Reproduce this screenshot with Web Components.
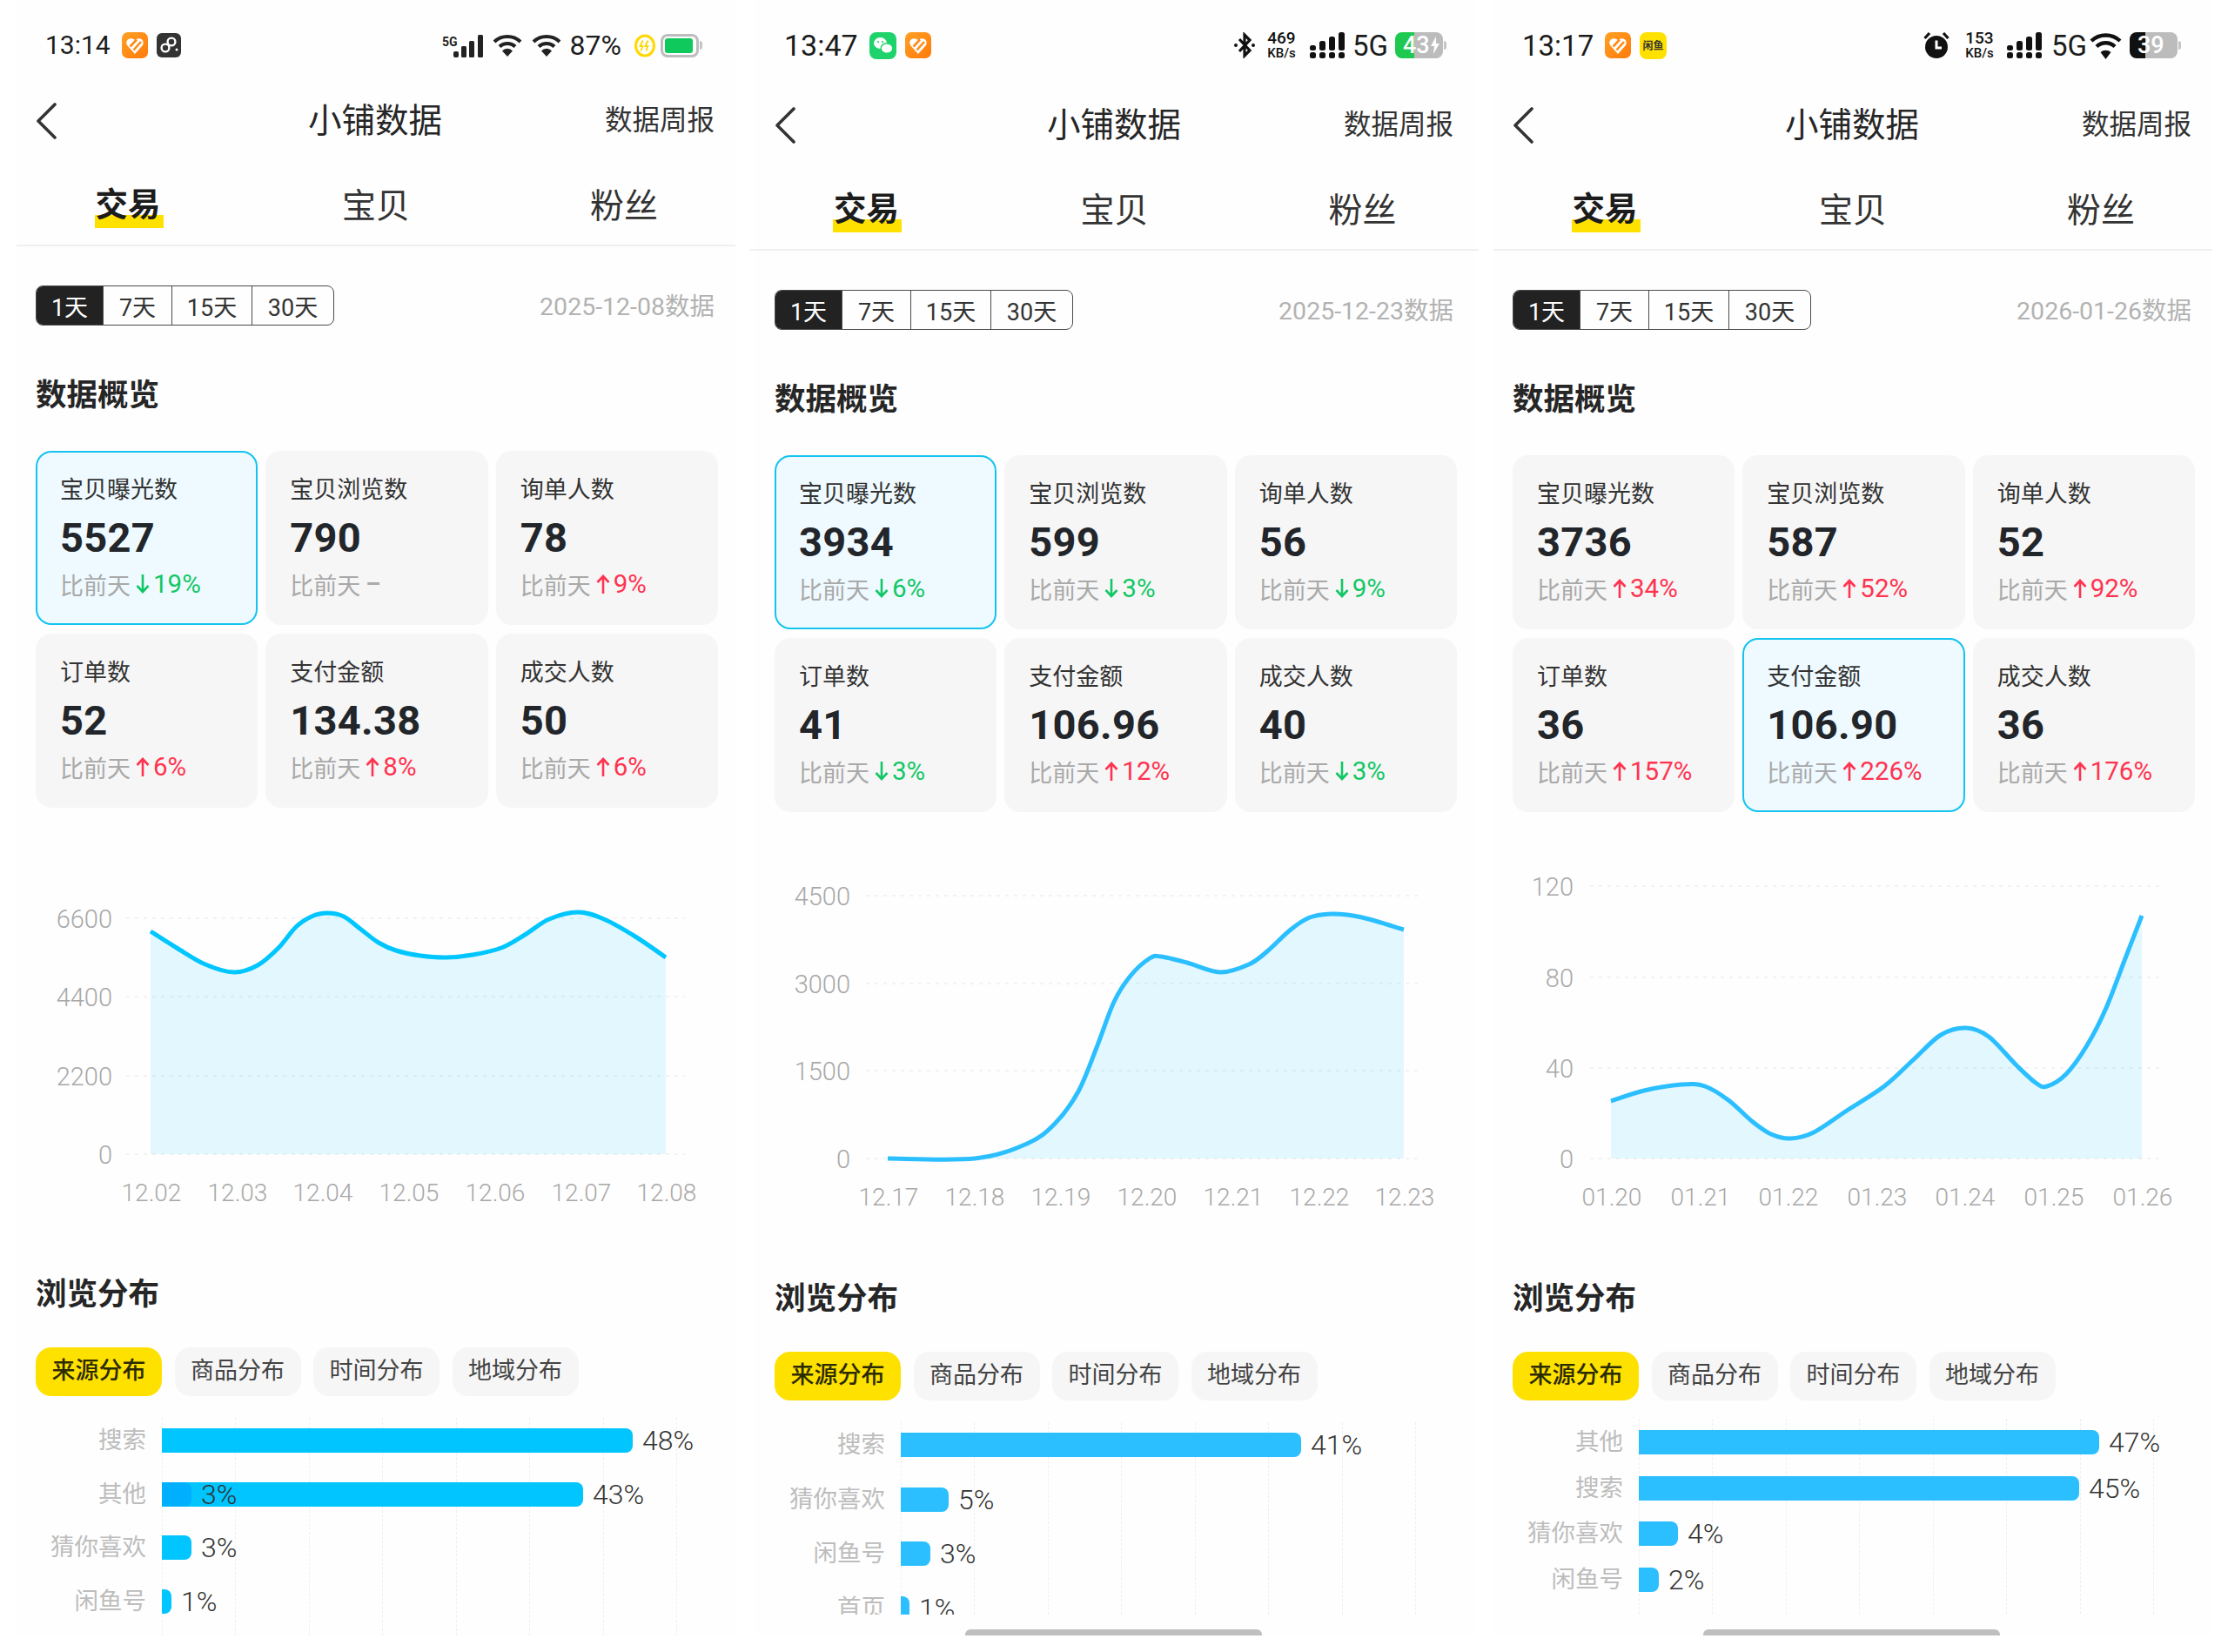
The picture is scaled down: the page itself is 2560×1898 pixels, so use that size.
<!DOCTYPE html>
<html lang="zh">
<head>
<meta charset="utf-8">
<title>小铺数据</title>
<style>
  html, body { margin: 0; padding: 0; background: #fff; }
  body {
    width: 2560px; height: 1898px; overflow: hidden;
    font-family: Roboto, "Noto Sans CJK SC", sans-serif; color: #222;
  }
  #page { display: flex; padding-left: 19px; }
  #page > phone-panel + phone-panel { margin-left: 23px; }
  #page > phone-panel:last-child { margin-left: 22px; }
</style>
</head>
<body>
<div id="page">

  <!-- first screenshot -->
  <phone-panel>
    <status-bar time="13:14" size="30" end="14">
      <status-icon slot="apps" name="orange"></status-icon>
      <status-icon slot="apps" name="dark"></status-icon>
      <status-icon name="signal5g"></status-icon>
      <status-icon name="wifi" style="margin-left:10px"></status-icon>
      <status-icon name="wifi" style="margin-left:11px"></status-icon>
      <status-text size="32" style="margin-left:10px">87%</status-text>
      <status-icon name="charge" style="margin-left:15px"></status-icon>
      <status-battery kind="outline" style="margin-left:6px"></status-battery>
    </status-bar>
    <nav-header></nav-header>
    <top-tabs></top-tabs>
    <range-row date="2025-12-08数据"></range-row>
    <section-title>数据概览</section-title>
    <metric-grid>
      <metric-card active label="宝贝曝光数" value="5527" trend="19%" dir="down"></metric-card>
      <metric-card label="宝贝浏览数" value="790" trend="" dir="flat"></metric-card>
      <metric-card label="询单人数" value="78" trend="9%" dir="up"></metric-card>
      <metric-card label="订单数" value="52" trend="6%" dir="up"></metric-card>
      <metric-card label="支付金额" value="134.38" trend="8%" dir="up"></metric-card>
      <metric-card label="成交人数" value="50" trend="6%" dir="up"></metric-card>
    </metric-grid>
    <trend-chart left="19" top="927" color="#00c6ff" gx1="145" gx2="787" lx="129" xy="1379"
      ylabels="6600:1054,4400:1144,2200:1235,0:1325"
      xlabels="12.02:174,12.03:273,12.04:371,12.05:470,12.06:569,12.07:668,12.08:766"
      points="173,1069 203,1088 236,1107 269,1116 296,1108 320,1088 340,1064 358,1052 376,1048 395,1052 415,1067 435,1082 455,1091 483,1097 513,1099 543,1096 576,1088 603,1073 631,1055 664,1047 694,1055 730,1075 765,1099"></trend-chart>
    <section-title gap="0">浏览分布</section-title>
    <pill-tabs></pill-tabs>
    <dist-bars style="--dist-h:250px;--dist-pad:12px;--dist-gap:33.5px;--dist-top:25px">
      <dist-row label="搜索" value="48%" width="541"></dist-row>
      <dist-row label="其他" value="43%" width="484" overlay="3%" overlay-width="34"></dist-row>
      <dist-row label="猜你喜欢" value="3%" width="34"></dist-row>
      <dist-row label="闲鱼号" value="1%" width="11"></dist-row>
    </dist-bars>
  </phone-panel>

  <!-- second screenshot -->
  <phone-panel style="--shift:5px;--rule-l:-28px;--rule-r:-29px;--bar:#2bbfff">
    <status-bar time="13:47" size="34" end="8">
      <status-icon slot="apps" name="wechat"></status-icon>
      <status-icon slot="apps" name="orange"></status-icon>
      <status-icon name="bluetooth"></status-icon>
      <status-speed style="margin-left:12px">469</status-speed>
      <status-icon name="signal" style="margin-left:15px"></status-icon>
      <status-text size="33" style="margin-left:8px">5G</status-text>
      <status-battery kind="solid" level="40" tone="#1fc94f" text="43" bolt style="margin-left:8px"></status-battery>
    </status-bar>
    <nav-header></nav-header>
    <top-tabs></top-tabs>
    <range-row date="2025-12-23数据"></range-row>
    <section-title>数据概览</section-title>
    <metric-grid>
      <metric-card active label="宝贝曝光数" value="3934" trend="6%" dir="down"></metric-card>
      <metric-card label="宝贝浏览数" value="599" trend="3%" dir="down"></metric-card>
      <metric-card label="询单人数" value="56" trend="9%" dir="down"></metric-card>
      <metric-card label="订单数" value="41" trend="3%" dir="down"></metric-card>
      <metric-card label="支付金额" value="106.96" trend="12%" dir="up"></metric-card>
      <metric-card label="成交人数" value="40" trend="3%" dir="down"></metric-card>
    </metric-grid>
    <trend-chart left="868" top="932" color="#2bbfff" gx1="995" gx2="1635" lx="977" xy="1384"
      ylabels="4500:1028,3000:1129,1500:1229,0:1330"
      xlabels="12.17:1021,12.18:1120,12.19:1219,12.20:1318,12.21:1417,12.22:1516,12.23:1614"
      points="1020,1330 1120,1330 1180,1313 1212,1290 1239,1253 1261,1200 1280,1150 1299,1120 1321,1100 1334,1098 1364,1105 1402,1116 1435,1107 1456,1092 1483,1067 1505,1053 1532,1049 1565,1053 1613,1067"></trend-chart>
    <section-title gap="0">浏览分布</section-title>
    <pill-tabs></pill-tabs>
    <dist-bars style="--dist-h:221px;--dist-pad:12px;--dist-gap:34.5px;--dist-top:25px">
      <dist-row label="搜索" value="41%" width="460"></dist-row>
      <dist-row label="猜你喜欢" value="5%" width="55"></dist-row>
      <dist-row label="闲鱼号" value="3%" width="34"></dist-row>
      <dist-row label="首页" value="1%" width="10"></dist-row>
    </dist-bars>
    <scroll-thumb></scroll-thumb>
  </phone-panel>

  <!-- third screenshot -->
  <phone-panel style="--shift:5px;--bar:#2bbfff">
    <status-bar time="13:17" size="33" end="12">
      <status-icon slot="apps" name="orange"></status-icon>
      <status-icon slot="apps" name="yellow"></status-icon>
      <status-icon name="alarm"></status-icon>
      <status-speed style="margin-left:16px">153</status-speed>
      <status-icon name="signal" style="margin-left:14px"></status-icon>
      <status-text size="33" style="margin-left:10px">5G</status-text>
      <status-icon name="wifi-big" style="margin-left:3px"></status-icon>
      <status-battery kind="solid" level="32" tone="#111" text="39" style="margin-left:9px"></status-battery>
    </status-bar>
    <nav-header></nav-header>
    <top-tabs></top-tabs>
    <range-row date="2026-01-26数据"></range-row>
    <section-title>数据概览</section-title>
    <metric-grid>
      <metric-card label="宝贝曝光数" value="3736" trend="34%" dir="up"></metric-card>
      <metric-card label="宝贝浏览数" value="587" trend="52%" dir="up"></metric-card>
      <metric-card label="询单人数" value="52" trend="92%" dir="up"></metric-card>
      <metric-card label="订单数" value="36" trend="157%" dir="up"></metric-card>
      <metric-card active label="支付金额" value="106.90" trend="226%" dir="up"></metric-card>
      <metric-card label="成交人数" value="36" trend="176%" dir="up"></metric-card>
    </metric-grid>
    <trend-chart left="1716" top="932" color="#2bbfff" gx1="1827" gx2="2482" lx="1808" xy="1384"
      ylabels="120:1017,80:1122,40:1226,0:1330"
      xlabels="01.20:1852,01.21:1954,01.22:2055,01.23:2157,01.24:2258,01.25:2360,01.26:2462"
      points="1851,1264 1889,1252 1932,1245 1959,1247 1986,1263 2014,1288 2035,1302 2057,1307 2084,1300 2122,1275 2165,1247 2198,1217 2230,1188 2259,1180 2285,1190 2317,1223 2339,1243 2352,1247 2374,1233 2398,1200 2420,1157 2442,1100 2461,1051"></trend-chart>
    <section-title gap="0">浏览分布</section-title>
    <pill-tabs></pill-tabs>
    <dist-bars style="--dist-h:224px;--dist-pad:13px;--dist-gap:24.6px;--dist-top:21px">
      <dist-row label="其他" value="47%" width="529"></dist-row>
      <dist-row label="搜索" value="45%" width="506"></dist-row>
      <dist-row label="猜你喜欢" value="4%" width="45"></dist-row>
      <dist-row label="闲鱼号" value="2%" width="23"></dist-row>
    </dist-bars>
    <scroll-thumb></scroll-thumb>
  </phone-panel>

</div>

<script>
// each screenshot of the app
class PhonePanel extends HTMLElement {
    constructor() {
        super();
        this.attachShadow({ mode: 'open' }).innerHTML = `
          <style>
            :host {
              display: block; position: relative; box-sizing: border-box;
              width: 826px; height: 1880px; padding: 0 24px 0 22px;
              background: #fefefe; flex: none;
            }
          </style>
          <slot></slot>`;
    }
}

class StatusBar extends HTMLElement {
    connectedCallback() {
        const size = this.getAttribute('size');
        const end = this.getAttribute('end');
        this.attachShadow({ mode: 'open' }).innerHTML = `
          <style>
            :host { display: flex; align-items: center; height: 104px; margin-left: 11px; padding-right: ${end}px; }
            .time { font-size: ${size}px; color: #1c1c1c; margin-right: 13px; line-height: 1; }
            .apps { display: flex; gap: 10px; align-items: center; }
            .right { margin-left: auto; display: flex; align-items: center; }
          </style>
          <span class="time">${this.getAttribute('time')}</span>
          <div class="apps"><slot name="apps"></slot></div>
          <div class="right"><slot></slot></div>`;
    }
}

const ICONS = {
    orange: [30, 30, `<defs><linearGradient id="o" x1="0" y1="0" x2="1" y2="1"><stop offset="0" stop-color="#ffa126"/><stop offset="1" stop-color="#ff7a0a"/></linearGradient></defs>
        <rect width="30" height="30" rx="7" fill="url(#o)"/>
        <path d="M15 25 L6.5 15.5 C2.5 10 9 4 15 9 C21 4 27.5 10 23.5 15.5 Z" fill="#fff"/>
        <path d="M9.5 16.5 L17 8.5 M13.5 20.5 L22 11" stroke="#ff8a14" stroke-width="2.6" fill="none"/>`],
    dark: [28, 28, `<rect width="28" height="28" rx="6" fill="#333"/>
        <circle cx="10" cy="17" r="4.4" fill="none" stroke="#fff" stroke-width="2.4"/>
        <circle cx="17" cy="10" r="4.4" fill="none" stroke="#fff" stroke-width="2.4"/>
        <circle cx="23" cy="19" r="1.5" fill="#fff"/>`],
    wechat: [31, 31, `<rect width="31" height="31" rx="8" fill="#1ed36b"/>
        <ellipse cx="12.5" cy="12.5" rx="7.5" ry="6.5" fill="#fff"/>
        <ellipse cx="20" cy="18.5" rx="6.8" ry="5.8" fill="#fff" stroke="#1ed36b" stroke-width="1.4"/>
        <circle cx="10" cy="11" r="1.1" fill="#1ed36b"/><circle cx="15" cy="11" r="1.1" fill="#1ed36b"/>`],
    yellow: [31, 31, `<rect width="31" height="31" rx="8" fill="#ffe100"/>
        <text x="15.5" y="20" font-size="12" font-weight="700" fill="#333" text-anchor="middle" font-family="Noto Sans CJK SC">闲鱼</text>`],
    signal5g: [48, 27, `<text x="0" y="13.5" font-size="14" font-weight="700" fill="#222" font-family="Roboto">5G</text>
        <rect x="13" y="20" width="6" height="7" rx="2" fill="#222"/>
        <rect x="22" y="14" width="6" height="13" rx="1.5" fill="#222"/>
        <rect x="31" y="8" width="6" height="19" rx="1.5" fill="#222"/>
        <rect x="41" y="1" width="6" height="26" rx="1.5" fill="#222"/>`],
    signal: [41, 30, `<g fill="#111">
        <rect x="0" y="23" width="7" height="7" rx="2.5"/><rect x="11" y="23" width="7" height="7" rx="2.5"/><rect x="22" y="23" width="7" height="7" rx="2.5"/><rect x="33" y="23" width="7" height="7" rx="2.5"/>
        <rect x="0" y="15" width="7" height="6" rx="2.5"/><rect x="11" y="10" width="7" height="11" rx="2.5"/><rect x="22" y="5" width="7" height="16" rx="2.5"/><rect x="33" y="0" width="7" height="21" rx="2.5"/></g>`],
    wifi: [34, 26, `<g fill="none" stroke="#222" stroke-width="4">
        <path d="M2 9 A22 22 0 0 1 32 9"/><path d="M8 14.5 A13 13 0 0 1 26 14.5"/></g>
        <path d="M17 26 L11 19.5 A8 8 0 0 1 23 19.5 Z" fill="#222"/>`],
    'wifi-big': [37, 31, `<g fill="none" stroke="#111" stroke-width="4.4">
        <path d="M2 10 A24 24 0 0 1 35 10"/><path d="M8 16.5 A15 15 0 0 1 29 16.5"/></g>
        <path d="M18.5 31 L12.5 23 A9 9 0 0 1 24.5 23 Z" fill="#111"/>`],
    charge: [24, 27, `<ellipse cx="12" cy="13.5" rx="10.5" ry="11.5" fill="none" stroke="#ffd800" stroke-width="3"/>
        <path d="M9.5 7.5 L6.5 14 H9.5 L7.5 19.5 M15.5 7.5 L12.5 14 H15.5 L13.5 19.5" fill="none" stroke="#ffd800" stroke-width="1.8"/>`],
    bluetooth: [26, 30, `<path d="M7 8 L19 21 L13 27 V3 L19 9 L7 22" fill="none" stroke="#111" stroke-width="3.2"/>
        <circle cx="3" cy="15" r="2" fill="#111"/><circle cx="23" cy="15" r="2" fill="#111"/>`],
    alarm: [32, 32, `<circle cx="16" cy="18" r="13" fill="#111"/>
        <path d="M16 10.5 V19 H22" fill="none" stroke="#fff" stroke-width="3"/>
        <path d="M2.5 8 L8 2 M29.5 8 L24 2" stroke="#111" stroke-width="3.2" fill="none"/>`],
};

class StatusIcon extends HTMLElement {
    connectedCallback() {
        const [w, h, body] = ICONS[this.getAttribute('name')];
        this.attachShadow({ mode: 'open' }).innerHTML = `
          <style>:host { display: block; line-height: 0; width: ${w}px; height: ${h}px; } svg { display: block; }</style>
          <svg width="${w}" height="${h}" viewBox="0 0 ${w} ${h}">${body}</svg>`;
    }
}

class StatusText extends HTMLElement {
    connectedCallback() {
        this.attachShadow({ mode: 'open' }).innerHTML = `
          <style>:host { display: block; font-size: ${this.getAttribute('size')}px; line-height: 1; color: #1c1c1c; }</style><slot></slot>`;
    }
}

class StatusSpeed extends HTMLElement {
    connectedCallback() {
        this.attachShadow({ mode: 'open' }).innerHTML = `
          <style>
            :host { display: flex; flex-direction: column; align-items: center; color: #111; width: 35px; }
            b { font-size: 19px; font-weight: 500; line-height: 18px; }
            span { font-size: 15px; font-weight: 500; line-height: 16px; white-space: nowrap; }
          </style>
          <b><slot></slot></b><span>KB/s</span>`;
    }
}

class StatusBattery extends HTMLElement {
    connectedCallback() {
        const kind = this.getAttribute('kind');
        let inner;
        if (kind === 'outline') {
            inner = `<div class="outline"><i></i></div><u class="nub"></u>`;
        } else {
            const lvl = this.getAttribute('level');
            const tone = this.getAttribute('tone');
            const bolt = this.hasAttribute('bolt')
                ? `<svg width="10" height="20" viewBox="0 0 10 20"><path d="M6 0 L0 11 H4 L3 20 L10 8 H6 Z" fill="#fff"/></svg>` : '';
            inner = `<div class="solid" style="background:linear-gradient(90deg,${tone} ${lvl}%,#bcbcbc ${lvl}%)"><span>${this.getAttribute('text')}</span>${bolt}</div><u class="nub"></u>`;
        }
        this.attachShadow({ mode: 'open' }).innerHTML = `
          <style>
            :host { display: flex; align-items: center; }
            .outline { box-sizing: border-box; width: 44px; height: 27px; border: 3px solid #bdbdbd; border-radius: 8px; padding: 2px; }
            .outline i { display: block; width: 32px; height: 100%; background: #10c95c; border-radius: 3px; }
            .solid { box-sizing: border-box; width: 55px; height: 30px; border-radius: 8px; display: flex; align-items: center; padding-left: 9px; gap: 1px;
                     color: #fff; font-size: 27px; font-weight: 500; line-height: 1; }
            .nub { width: 3px; height: 10px; background: #c4c4c4; border-radius: 0 3px 3px 0; margin-left: 1px; }
          </style>${inner}`;
    }
}

class NavHeader extends HTMLElement {
    constructor() {
        super();
        this.attachShadow({ mode: 'open' }).innerHTML = `
          <style>
            :host { display: grid; grid-template-columns: 1fr auto 1fr; align-items: center; height: 70px; margin-top: var(--shift, 0px); }
            svg { display: block; }
            .title { font-size: 38.5px; color: #262626; line-height: 1; }
            .more { justify-self: end; font-size: 31.5px; color: #333; line-height: 1; }
          </style>
          <svg width="24" height="42" viewBox="0 0 24 42"><path d="M22 2 L3 21 L22 40" fill="none" stroke="#333" stroke-width="3.6" stroke-linecap="round" stroke-linejoin="round"/></svg>
          <span class="title">小铺数据</span>
          <span class="more">数据周报</span>`;
    }
}

class TopTabs extends HTMLElement {
    constructor() {
        super();
        this.attachShadow({ mode: 'open' }).innerHTML = `
          <style>
            :host {
              display: flex; justify-content: center; align-items: center; height: 91px; margin: 16px var(--rule-r, -24px) 0 var(--rule-l, -22px);
              border-bottom: 2px solid #efefef; box-sizing: content-box;
            }
            div { width: 285px; flex: none; text-align: center; font-size: 39px; line-height: 1; color: #333; position: relative; top: 2px; }
            b { position: relative; display: inline-block; font-size: 37.5px; font-weight: 700; color: #1c1c1c; }
            b::before { content: ""; position: absolute; left: -1px; right: -3px; bottom: -7px; height: 15px; background: #ffe100; z-index: -1; }
            .on { z-index: 0; top: 0; }
          </style>
          <div class="on"><b>交易</b></div><div>宝贝</div><div>粉丝</div>`;
    }
}

class RangeRow extends HTMLElement {
    connectedCallback() {
        this.attachShadow({ mode: 'open' }).innerHTML = `
          <style>
            :host { display: flex; justify-content: space-between; align-items: center; height: 46px; margin-top: 45px; }
            .seg { display: flex; height: 46px; box-sizing: border-box; border: 1.5px solid #4a4a4a; border-radius: 8px; overflow: hidden; }
            .seg span { display: flex; align-items: center; justify-content: center; font-size: 27px; color: #333; border-left: 1.5px solid #4a4a4a; box-sizing: border-box; }
            .seg span:first-child { background: #222; color: #fff; border-left: 0; }
            .date { font-size: 28.5px; color: #b2b2b2; position: relative; top: -2px; }
          </style>
          <div class="seg">
            <span style="width:76px">1天</span><span style="width:79px">7天</span><span style="width:92px">15天</span><span style="width:94px">30天</span>
          </div>
          <span class="date">${this.getAttribute('date')}</span>`;
    }
}

class SectionTitle extends HTMLElement {
    connectedCallback() {
        const gap = this.getAttribute('gap') ?? '55';
        this.attachShadow({ mode: 'open' }).innerHTML = `
          <style>:host { display: block; height: 50px; line-height: 50px; font-size: 35.5px; font-weight: 700; color: #262626; margin-top: ${gap}px; }</style>
          <slot></slot>`;
    }
}

class MetricGrid extends HTMLElement {
    constructor() {
        super();
        this.attachShadow({ mode: 'open' }).innerHTML = `
          <style>:host { display: grid; grid-template-columns: repeat(3, 1fr); gap: 10px 9px; width: 784px; margin-top: 39px; }</style>
          <slot></slot>`;
    }
}

class MetricCard extends HTMLElement {
    connectedCallback() {
        const dir = this.getAttribute('dir');
        const colour = dir === 'up' ? '#ff3350' : '#12c765';
        let mark = '<span class="flat">–</span>';
        if (dir === 'up') {
            mark = `<svg width="18" height="24" viewBox="0 0 18 24"><path d="M9 23 V3 M2.5 10 L9 3 L15.5 10" fill="none" stroke="${colour}" stroke-width="2.6"/></svg>`;
        } else if (dir === 'down') {
            mark = `<svg width="18" height="24" viewBox="0 0 18 24"><path d="M9 1 V21 M2.5 14 L9 21 L15.5 14" fill="none" stroke="${colour}" stroke-width="2.6"/></svg>`;
        }
        const isOn = this.hasAttribute('active');
        this.attachShadow({ mode: 'open' }).innerHTML = `
          <style>
            :host {
              display: flex; flex-direction: column; box-sizing: border-box; height: 200px; padding: 28px 0 0 26px;
              border: 2px solid ${isOn ? '#14c3ef' : 'transparent'}; border-radius: 18px;
              background: ${isOn ? '#eefaff' : '#f6f6f6'};
            }
            .label { font-size: 27px; line-height: 30px; color: #333; }
            .value { font-size: 47px; font-weight: 700; line-height: 50px; margin-top: 15px; color: #22262b; letter-spacing: .3px; }
            .cmp { display: flex; align-items: center; height: 30px; margin-top: 13px; font-size: 27px; color: #a9a9a9; white-space: nowrap; }
            svg { margin: 0 3px 0 5px; flex: none; }
            .pct { color: ${colour}; font-size: 29.5px; }
            .flat { margin-left: 6px; font-weight: 700; color: #aaa; }
          </style>
          <div class="label">${this.getAttribute('label')}</div>
          <div class="value">${this.getAttribute('value')}</div>
          <div class="cmp">比前天${mark}<span class="pct">${this.getAttribute('trend')}</span></div>`;
    }
}

class TrendChart extends HTMLElement {
    connectedCallback() {
        const left = this.getAttribute('left');
        const top = this.getAttribute('top');
        const color = this.getAttribute('color');
        const gx1 = this.getAttribute('gx1');
        const gx2 = this.getAttribute('gx2');
        const lx = this.getAttribute('lx');
        const xy = this.getAttribute('xy');
        const pts = this.getAttribute('points').split(' ').map(p => p.split(',').map(Number));

        let grid = '';
        let base = 0;
        this.getAttribute('ylabels').split(',').forEach(item => {
            const [t, y] = item.split(':');
            base = Number(y);
            grid += `<line x1="${gx1}" x2="${gx2}" y1="${y}" y2="${y}" stroke="#eeeeee" stroke-width="1.5" stroke-dasharray="4 6"/>`;
            grid += `<text x="${lx}" y="${base + 11}" text-anchor="end">${t}</text>`;
        });
        let xs = '';
        this.getAttribute('xlabels').split(',').forEach(item => {
            const [t, x] = item.split(':');
            xs += `<text class="x" x="${x}" y="${xy}" text-anchor="middle">${t}</text>`;
        });

        const line = this.smooth(pts);
        const first = pts[0];
        const last = pts[pts.length - 1];
        this.attachShadow({ mode: 'open' }).innerHTML = `
          <style>
            :host { display: block; height: 534px; margin: 0 -24px 0 -22px; }
            svg { display: block; }
            text { font-family: Roboto, sans-serif; font-weight: 300; font-size: 29px; fill: #a8a8a8; }
            text.x { font-size: 28px; }
          </style>
          <svg width="826" height="534" viewBox="${left} ${top} 826 534">
            ${grid}${xs}
            <path d="${line} L${last[0]} ${base} L${first[0]} ${base} Z" fill="#00c0ff" fill-opacity=".105"/>
            <path d="${line}" fill="none" stroke="${color}" stroke-width="5" stroke-linejoin="round"/>
          </svg>`;
    }

    // catmull-rom through the sampled points
    smooth(p) {
        let d = `M${p[0][0]} ${p[0][1]}`;
        for (let i = 0; i < p.length - 1; i++) {
            const a = p[Math.max(i - 1, 0)];
            const b = p[i];
            const c = p[i + 1];
            const e = p[Math.min(i + 2, p.length - 1)];
            const c1x = b[0] + (c[0] - a[0]) / 6;
            const c1y = b[1] + (c[1] - a[1]) / 6;
            const c2x = c[0] - (e[0] - b[0]) / 6;
            const c2y = c[1] - (e[1] - b[1]) / 6;
            d += ` C${c1x.toFixed(1)} ${c1y.toFixed(1)} ${c2x.toFixed(1)} ${c2y.toFixed(1)} ${c[0]} ${c[1]}`;
        }
        return d;
    }
}

class PillTabs extends HTMLElement {
    constructor() {
        super();
        this.attachShadow({ mode: 'open' }).innerHTML = `
          <style>
            :host { display: flex; gap: 14.5px; margin-top: 36px; }
            span { display: flex; align-items: center; justify-content: center; width: 145px; height: 56px; border-radius: 18px; background: #f6f6f6; font-size: 27px; line-height: 1; color: #444; padding-bottom: 2px; box-sizing: border-box; }
            span.on { background: #ffe100; color: #2b2b00; font-weight: 500; }
          </style>
          <span class="on">来源分布</span><span>商品分布</span><span>时间分布</span><span>地域分布</span>`;
    }
}

class DistBars extends HTMLElement {
    constructor() {
        super();
        const lines = '<i></i>'.repeat(8);
        this.attachShadow({ mode: 'open' }).innerHTML = `
          <style>
            :host {
              display: block; position: relative; box-sizing: border-box; overflow: hidden;
              height: var(--dist-h); margin-top: var(--dist-top); padding-top: var(--dist-pad);
            }
            .lines { position: absolute; top: 0; bottom: 0; left: 145px; width: 592px; display: flex; justify-content: space-between; }
            .lines i { display: block; width: 0; border-left: 1.5px dashed #efefef; }
            .rows { position: relative; display: flex; flex-direction: column; gap: var(--dist-gap); }
          </style>
          <div class="lines">${lines}</div>
          <div class="rows"><slot></slot></div>`;
    }
}

class DistRow extends HTMLElement {
    connectedCallback() {
        const ow = this.getAttribute('overlay-width');
        const over = ow
            ? `<i class="over" style="width:${ow}px"></i><span class="over-t" style="left:${Number(ow) + 11}px">${this.getAttribute('overlay')}</span>` : '';
        this.attachShadow({ mode: 'open' }).innerHTML = `
          <style>
            :host { display: flex; align-items: center; height: 28px; }
            .label { width: 127px; margin-right: 18px; text-align: right; font-size: 27.5px; color: #bdbdbd; line-height: 28px; white-space: nowrap; flex: none; }
            .bar { position: relative; height: 28px; border-radius: 0 8px 8px 0; background: var(--bar, #00c5ff); flex: none; }
            .over { position: absolute; left: 0; top: 0; bottom: 0; background: #00b0ff; border-radius: 0 8px 8px 0; }
            .over-t { position: absolute; top: -2px; line-height: 32px; }
            .val { margin-left: 11px; }
            .val, .over-t { font-size: 32px; font-weight: 300; color: #333; }
          </style>
          <span class="label">${this.getAttribute('label')}</span>
          <div class="bar" style="width:${this.getAttribute('width')}px">${over}</div>
          <span class="val">${this.getAttribute('value')}</span>`;
    }
}

class ScrollThumb extends HTMLElement {
    constructor() {
        super();
        this.attachShadow({ mode: 'open' }).innerHTML = `
          <style>
            :host { display: block; position: absolute; left: 241px; top: 1872px; width: 341px; height: 7px; background: #bfbfbf; border-radius: 6px 6px 0 0; }
          </style>`;
    }
}

window.customElements.define('phone-panel', PhonePanel);
window.customElements.define('status-bar', StatusBar);
window.customElements.define('status-icon', StatusIcon);
window.customElements.define('status-text', StatusText);
window.customElements.define('status-speed', StatusSpeed);
window.customElements.define('status-battery', StatusBattery);
window.customElements.define('nav-header', NavHeader);
window.customElements.define('top-tabs', TopTabs);
window.customElements.define('range-row', RangeRow);
window.customElements.define('section-title', SectionTitle);
window.customElements.define('metric-grid', MetricGrid);
window.customElements.define('metric-card', MetricCard);
window.customElements.define('trend-chart', TrendChart);
window.customElements.define('pill-tabs', PillTabs);
window.customElements.define('dist-bars', DistBars);
window.customElements.define('dist-row', DistRow);
window.customElements.define('scroll-thumb', ScrollThumb);
</script>
</body>
</html>
